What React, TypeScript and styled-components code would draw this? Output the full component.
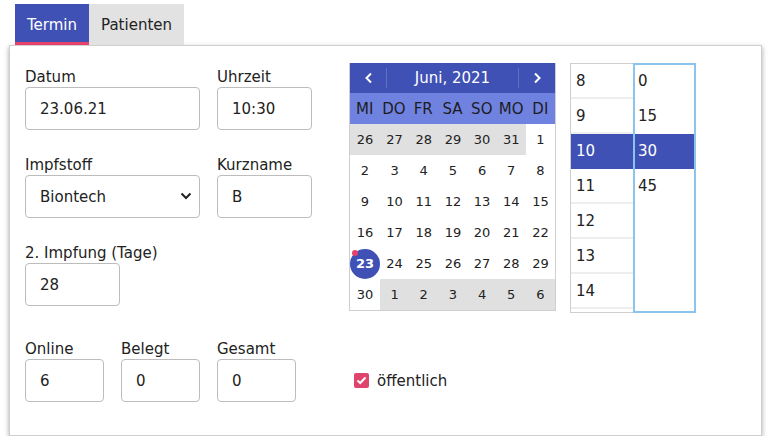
import React from "react";
import styled, { createGlobalStyle } from "styled-components";

const GlobalStyle = createGlobalStyle`
  html, body {
    margin: 0;
    padding: 0;
    background: #fff;
    font-family: "DejaVu Sans", Verdana, sans-serif;
    color: #222;
  }
  * { box-sizing: border-box; }
`;

const Page = styled.div`
  padding: 4px 8px 0 9px;
  width: 770px;
`;

const Tabs = styled.div`
  display: flex;
  margin-left: 6px;
`;

const Tab = styled.div<{ $active?: boolean }>`
  height: 41px;
  padding: 3px 12px 0;
  display: flex;
  align-items: center;
  font-size: 15px;
  background: ${(p) => (p.$active ? "#3f51b5" : "#e2e2e2")};
  color: ${(p) => (p.$active ? "#fff" : "#222")};
  border-bottom: 3px solid ${(p) => (p.$active ? "#e5416b" : "#e2e2e2")};
`;

const Panel = styled.div`
  width: 753px;
  height: 391px;
  border: 1px solid #cfcfcf;
  box-shadow: 0 2px 5px rgba(0, 0, 0, 0.35);
  padding: 17px 15px 0 15px;
  background: #fff;
`;

const TopSection = styled.div`
  display: flex;
  align-items: flex-start;
`;

const FormColumn = styled.div`
  margin-top: 4px;
  width: 287px;
  display: flex;
  flex-direction: column;
  gap: 25px;
`;

const Row = styled.div`
  display: flex;
  gap: 17px;
`;

const Field = styled.div`
  display: flex;
  flex-direction: column;
`;

const Label = styled.label`
  font-size: 15px;
  line-height: 20px;
  height: 20px;
`;

const Input = styled.input<{ $w: number }>`
  width: ${(p) => p.$w}px;
  height: 43px;
  border: 1px solid #bcbcbc;
  border-radius: 4px;
  padding: 0 0 0 14px;
  font-family: inherit;
  font-size: 15px;
  color: #222;
  outline: none;
  background: #fff;
`;

const SelectBox = styled.div`
  position: relative;
  width: 175px;
  height: 43px;
`;

const Select = styled.select`
  appearance: none;
  width: 100%;
  height: 100%;
  border: 1px solid #bcbcbc;
  border-radius: 4px;
  padding: 0 0 0 14px;
  font-family: inherit;
  font-size: 15px;
  color: #222;
  background: #fff;
  outline: none;
`;

const Chevron = styled.svg`
  position: absolute;
  right: 8px;
  top: 16px;
  pointer-events: none;
`;

const Calendar = styled.div`
  margin-left: 37px;
  width: 207px;
  border: 1px solid #cfcfcf;
  border-top: none;
`;

const CalHeader = styled.div`
  height: 30px;
  background: #3f51b5;
  color: #fff;
  display: flex;
  align-items: center;
`;

const NavButton = styled.div<{ $side: "left" | "right" }>`
  width: 37px;
  height: 100%;
  display: flex;
  align-items: center;
  justify-content: center;
  position: relative;
  &::after {
    content: "";
    position: absolute;
    top: 5px;
    bottom: 5px;
    ${(p) => (p.$side === "left" ? "right: 0;" : "left: 0;")}
    width: 1px;
    background: rgba(255, 255, 255, 0.18);
  }
`;

const CalTitle = styled.div`
  flex: 1;
  text-align: center;
  font-size: 15px;
`;

const WeekRow = styled.div`
  height: 31px;
  background: #7082e0;
  display: grid;
  grid-template-columns: repeat(7, 1fr);
  align-items: center;
  font-size: 15px;
  text-align: center;
  color: #1d1d1d;
`;

const DayGrid = styled.div`
  display: grid;
  grid-template-columns: repeat(7, 1fr);
  grid-auto-rows: 31px;
`;

const Day = styled.div<{ $muted?: boolean }>`
  display: flex;
  align-items: center;
  justify-content: center;
  font-size: 13px;
  background: ${(p) => (p.$muted ? "#e0e0e0" : "#fff")};
  color: #222;
  position: relative;
`;

const Selected = styled.span`
  width: 30px;
  height: 30px;
  border-radius: 50%;
  background: #3f51b5;
  color: #fff;
  font-weight: bold;
  display: flex;
  align-items: center;
  justify-content: center;
  font-size: 13px;
`;

const Dot = styled.span`
  position: absolute;
  left: 2px;
  top: 2px;
  width: 6px;
  height: 6px;
  border-radius: 50%;
  background: #e5416b;
`;

const TimePicker = styled.div`
  margin-left: 14px;
  display: flex;
  height: 250px;
`;

const TimeColumn = styled.div<{ $focus?: boolean }>`
  width: 63px;
  height: 100%;
  overflow: hidden;
  border: ${(p) => (p.$focus ? "2px solid #8cc4f0" : "1px solid #cfcfcf")};
  ${(p) => (p.$focus ? "" : "border-right: none;")}
  & > div:first-child {
    margin-top: ${(p) => (p.$focus ? "-1px" : "0")};
  }
`;

const TimeItem = styled.div<{ $active?: boolean }>`
  height: 35px;
  padding-left: 5px;
  display: flex;
  align-items: center;
  font-size: 15px;
  border-bottom: 2px solid ${(p) => (p.$active ? "#3f51b5" : "#eeeeee")};
  background: ${(p) => (p.$active ? "#3f51b5" : "#fff")};
  color: ${(p) => (p.$active ? "#fff" : "#222")};
`;

const MinuteItem = styled(TimeItem)`
  border-bottom-color: ${(p) => (p.$active ? "#3f51b5" : "transparent")};
  padding-left: 3px;
`;

const BottomRow = styled.div`
  display: flex;
  align-items: flex-end;
  gap: 17px;
  margin-top: 26px;
`;

const CheckLabel = styled.label`
  margin-left: 41px;
  height: 43px;
  display: flex;
  align-items: center;
  gap: 8px;
  font-size: 15px;
`;

const CheckBox = styled.span`
  width: 15px;
  height: 15px;
  border-radius: 2px;
  background: #e0446c;
  display: flex;
  align-items: center;
  justify-content: center;
`;

type Cell = { d: number; muted?: boolean; sel?: boolean };

const days: Cell[] = [
  ...[26, 27, 28, 29, 30, 31].map((d) => ({ d, muted: true })),
  ...Array.from({ length: 30 }, (_, i) => ({ d: i + 1, sel: i + 1 === 23 })),
  ...[1, 2, 3, 4, 5, 6].map((d) => ({ d, muted: true })),
];

const weekdays = ["MI", "DO", "FR", "SA", "SO", "MO", "DI"];
const hours = [8, 9, 10, 11, 12, 13, 14];
const minutes = [0, 15, 30, 45];

export default function App() {
  return (
    <Page>
      <GlobalStyle />
      <Tabs>
        <Tab $active>Termin</Tab>
        <Tab>Patienten</Tab>
      </Tabs>
      <Panel>
        <TopSection>
          <FormColumn>
            <Row>
              <Field>
                <Label>Datum</Label>
                <Input $w={175} defaultValue="23.06.21" />
              </Field>
              <Field>
                <Label>Uhrzeit</Label>
                <Input $w={95} defaultValue="10:30" />
              </Field>
            </Row>
            <Row>
              <Field>
                <Label>Impfstoff</Label>
                <SelectBox>
                  <Select defaultValue="Biontech">
                    <option>Biontech</option>
                    <option>Moderna</option>
                    <option>AstraZeneca</option>
                  </Select>
                  <Chevron width="12" height="10" viewBox="0 0 12 10">
                    <path d="M1.5 2.5 L6 7 L10.5 2.5" fill="none" stroke="#222" strokeWidth="2" />
                  </Chevron>
                </SelectBox>
              </Field>
              <Field>
                <Label>Kurzname</Label>
                <Input $w={95} defaultValue="B" />
              </Field>
            </Row>
            <Row>
              <Field>
                <Label>2. Impfung (Tage)</Label>
                <Input $w={95} defaultValue="28" />
              </Field>
            </Row>
          </FormColumn>

          <Calendar>
            <CalHeader>
              <NavButton $side="left">
                <svg width="10" height="12" viewBox="0 0 10 12">
                  <path d="M7 1.5 L2.5 6 L7 10.5" fill="none" stroke="#fff" strokeWidth="2" />
                </svg>
              </NavButton>
              <CalTitle>Juni, 2021</CalTitle>
              <NavButton $side="right">
                <svg width="10" height="12" viewBox="0 0 10 12">
                  <path d="M3 1.5 L7.5 6 L3 10.5" fill="none" stroke="#fff" strokeWidth="2" />
                </svg>
              </NavButton>
            </CalHeader>
            <WeekRow>
              {weekdays.map((w) => (
                <span key={w}>{w}</span>
              ))}
            </WeekRow>
            <DayGrid>
              {days.map((c, i) => (
                <Day key={i} $muted={c.muted}>
                  {c.sel ? (
                    <>
                      <Selected>{c.d}</Selected>
                      <Dot />
                    </>
                  ) : (
                    c.d
                  )}
                </Day>
              ))}
            </DayGrid>
          </Calendar>

          <TimePicker>
            <TimeColumn>
              {hours.map((h) => (
                <TimeItem key={h} $active={h === 10}>
                  {h}
                </TimeItem>
              ))}
              <TimeItem />
            </TimeColumn>
            <TimeColumn $focus>
              {minutes.map((m) => (
                <MinuteItem key={m} $active={m === 30}>
                  {m}
                </MinuteItem>
              ))}
            </TimeColumn>
          </TimePicker>
        </TopSection>

        <BottomRow>
          <Field>
            <Label>Online</Label>
            <Input $w={79} defaultValue="6" />
          </Field>
          <Field>
            <Label>Belegt</Label>
            <Input $w={79} defaultValue="0" />
          </Field>
          <Field>
            <Label>Gesamt</Label>
            <Input $w={79} defaultValue="0" />
          </Field>
          <CheckLabel>
            <CheckBox>
              <svg width="11" height="9" viewBox="0 0 11 9">
                <path d="M1.5 4.5 L4.2 7 L9.5 1.5" fill="none" stroke="#fff" strokeWidth="2" />
              </svg>
            </CheckBox>
            öffentlich
          </CheckLabel>
        </BottomRow>
      </Panel>
    </Page>
  );
}
